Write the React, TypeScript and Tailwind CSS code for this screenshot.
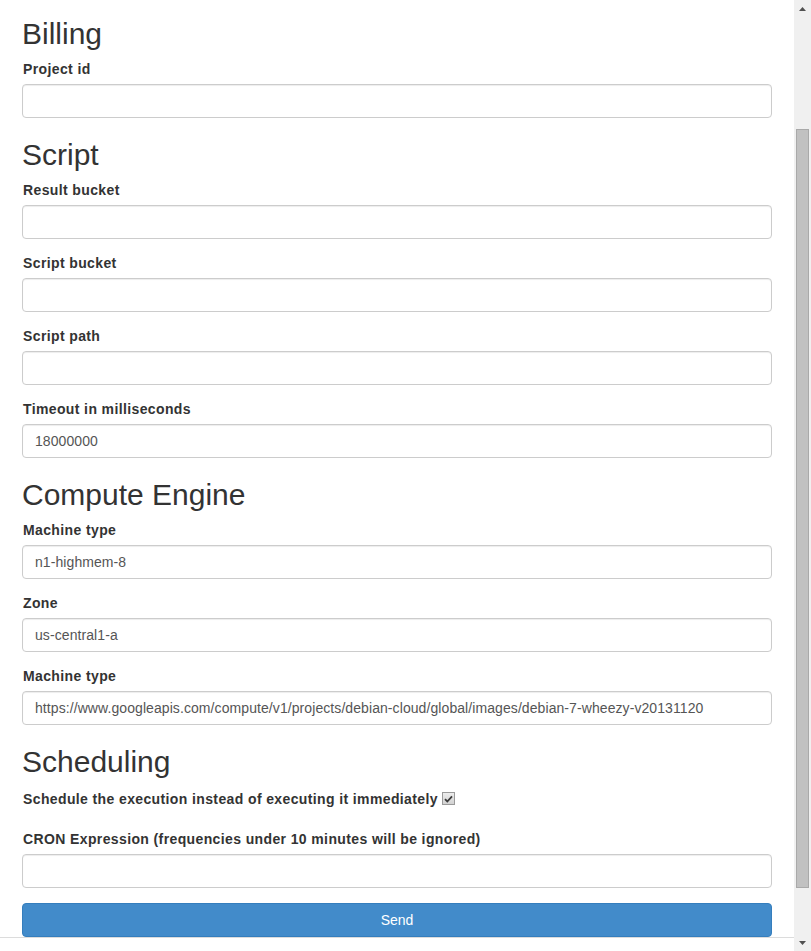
import React from 'react';

interface FieldProps {
  label: string;
  value?: string;
}

function Field({ label, value = '' }: FieldProps) {
  return (
    <div className="mb-[15px]">
      <label className="mb-[5px] block pl-[1px] font-bold leading-[19px] tracking-[0.38px]">{label}</label>
      <input
        type="text"
        readOnly
        value={value}
        className="block h-[34px] w-full rounded-[4px] border border-[#cccccc] bg-white px-[12px] text-[14px] tracking-[0.08px] text-[#555555] shadow-[inset_0_1px_1px_rgba(0,0,0,0.075)] outline-none"
      />
    </div>
  );
}

function Heading({ children, first = false }: { children: React.ReactNode; first?: boolean }) {
  return (
    <h2
      className={`${first ? 'mt-0' : 'mt-[20px]'} mb-[10px] text-[30px] font-normal leading-[33px] text-[#333333]`}
    >
      {children}
    </h2>
  );
}

/* fake checked checkbox, old windows style */
function CheckBox() {
  return (
    <span className="ml-[4px] mt-[2px] flex h-[13px] w-[13px] items-center justify-center border border-[#9a9a9a] bg-gradient-to-b from-[#ececec] to-[#d2d2d2]">
      <svg width="9" height="8" viewBox="0 0 9 8">
        <path d="M1 4.2 L3.3 6.5 L8 1.3" fill="none" stroke="#3a3a3a" strokeWidth="1.8" />
      </svg>
    </span>
  );
}

function Scrollbar() {
  return (
    <div className="flex h-full w-[17px] shrink-0 flex-col bg-[#f0f0f0]">
      <div className="flex h-[17px] items-center justify-center">
        <svg width="7" height="4" viewBox="0 0 7 4">
          <path d="M0 4 L3.5 0 L7 4 Z" fill="#505050" />
        </svg>
      </div>
      <div className="mx-[2px] mt-[112px] h-[759px] border border-[#a9a9a9] bg-[#c1c1c1]" />
      <div className="mt-auto flex h-[17px] items-center justify-center">
        <svg width="7" height="4" viewBox="0 0 7 4">
          <path d="M0 0 L7 0 L3.5 4 Z" fill="#505050" />
        </svg>
      </div>
    </div>
  );
}

export default function App() {
  return (
    <div className="flex h-[951px] w-[811px] overflow-hidden bg-white font-['Liberation_Sans',Arial,sans-serif] text-[14px] text-[#333333]">
      <div className="flex w-[794px] flex-col">
        <div className="h-[937px] overflow-hidden px-[22px] pt-[17px]">
          <Heading first>Billing</Heading>
          <Field label="Project id" />

          <Heading>Script</Heading>
          <Field label="Result bucket" />
          <Field label="Script bucket" />
          <Field label="Script path" />
          <Field label="Timeout in milliseconds" value="18000000" />

          <Heading>Compute Engine</Heading>
          <Field label="Machine type" value="n1-highmem-8" />
          <Field label="Zone" value="us-central1-a" />
          <Field
            label="Machine type"
            value="https://www.googleapis.com/compute/v1/projects/debian-cloud/global/images/debian-7-wheezy-v20131120"
          />

          <Heading>Scheduling</Heading>
          <div className="mb-[15px] flex h-[27px] items-start pt-[2px]">
            <label className="pl-[1px] font-bold leading-[19px] tracking-[0.38px]">
              Schedule the execution instead of executing it immediately
            </label>
            <CheckBox />
          </div>
          <Field label="CRON Expression (frequencies under 10 minutes will be ignored)" />

          <button
            type="button"
            className="block h-[34px] w-full rounded-[4px] border border-[#357ebd] bg-[#428bca] text-[14px] text-white"
          >
            Send
          </button>
        </div>
        <div className="h-[14px] border-t border-[#dcdcdc] bg-white" />
      </div>
      <Scrollbar />
    </div>
  );
}
